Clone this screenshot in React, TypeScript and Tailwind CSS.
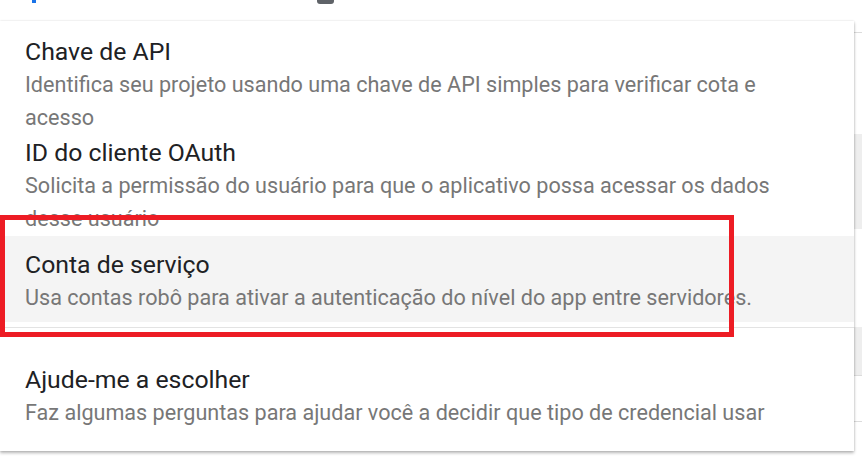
import React from "react";

export default function App() {
  const title = "text-[24.8px] leading-[32px] text-[#202124] tracking-[0px]";
  const desc = "text-[21.6px] leading-[33px] text-[#777777]";
  return (
    <div
      className="relative w-[862px] h-[464px] overflow-hidden bg-white"
      style={{ fontFamily: "Roboto, 'Noto Sans', Arial, sans-serif" }}
    >
      {/* background page */}
      <div className="flex flex-col w-full h-full">
        <div className="relative h-[33px] border-b border-[#dcdcdc]">
          <div className="absolute left-[32px] top-0 w-[4px] h-[3px] bg-[#1a73e8]" />
          <div className="absolute left-[317px] top-0 w-[17px] h-[4px] rounded-b-[3px] bg-[#5f6368]" />
        </div>
        <div className="h-[101px]" />
        <div className="h-[95px] bg-[#eeeeee]" />
        <div className="h-[98px]" />
        <div className="h-[49px] bg-[#eeeeee] border-b border-[#dcdcdc]" />
        <div className="h-[46px] border-b border-[#dcdcdc]" />
        <div className="flex-1" />
      </div>

      {/* dropdown menu */}
      <div className="absolute left-0 top-[21px] w-[854px] h-[430px] bg-white shadow-[0_2px_3px_rgba(0,0,0,0.28),0_0_2px_rgba(0,0,0,0.12)] flex flex-col">
        <div className="h-[113px] pt-[15px] pl-[25px] overflow-hidden">
          <div className={title}>Chave de API</div>
          <div className={`${desc} w-[790px]`}>
            Identifica seu projeto usando uma chave de API simples para verificar cota e acesso
          </div>
        </div>
        <div className="h-[102px] pt-[3px] pl-[25px] overflow-hidden">
          <div className={title}>ID do cliente OAuth</div>
          <div className={`${desc} w-[790px]`}>
            Solicita a permissão do usuário para que o aplicativo possa acessar os dados desse usuário
          </div>
        </div>
        <div className="h-[86px] bg-[#f4f4f4] pt-[13px] pl-[25px] overflow-hidden">
          <div className={title}>Conta de serviço</div>
          <div className={`${desc} whitespace-nowrap`}>
            Usa contas robô para ativar a autenticação do nível do app entre servidores.
          </div>
        </div>
        <div className="h-[6px] border-b border-[#e3e3e3]" />
        <div className="pt-[36px] pl-[25px]">
          <div className={title}>Ajude-me a escolher</div>
          <div className={`${desc} whitespace-nowrap`}>
            Faz algumas perguntas para ajudar você a decidir que tipo de credencial usar
          </div>
        </div>
      </div>

      {/* red annotation box */}
      <div className="absolute left-0 top-[215px] w-[734px] h-[122px] border-[5px] border-[#ed1c24]" />
    </div>
  );
}
